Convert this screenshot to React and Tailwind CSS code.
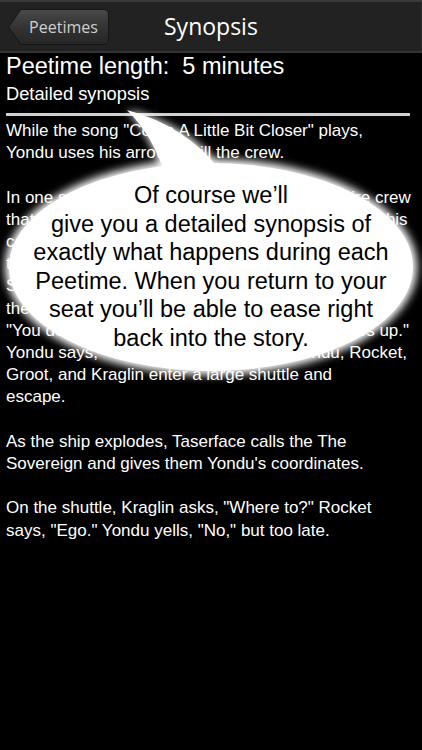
import React from 'react';

// paragraphs kept as the lines shown on the device screen
const paragraphs = [
  ['While the song "Come A Little Bit Closer" plays,', 'Yondu uses his arrow to kill the crew.'],
  [
    'In one swift sweep, Yondu\'s arrow kills the entire crew',
    'that betrayed him, and then it flies straight back to his',
    'command ship. Taserface, badly wounded, crawls',
    'to the console and sends a message to the ship.',
    'Sovereign fleet. Kraglin leads the others through',
    'the burning halls. Taserface warns them,',
    '"You don\'t have much time before this ship blows up."',
    'Yondu says, "Then we\'d better hurry." Yondu, Rocket,',
    'Groot, and Kraglin enter a large shuttle and',
    'escape.',
  ],
  ['As the ship explodes, Taserface calls the The', 'Sovereign and gives them Yondu\'s coordinates.'],
  ['On the shuttle, Kraglin asks, "Where to?" Rocket', 'says, "Ego." Yondu yells, "No," but too late.'],
];

const BackButton = () => (
  <div className="relative h-[36px] w-[101px]">
    <svg className="absolute inset-0" width="101" height="36" viewBox="0 0 101 36">
      <defs>
        <linearGradient id="btn" x1="0" y1="0" x2="0" y2="1">
          <stop offset="0" stopColor="#4a4a4a" />
          <stop offset="0.5" stopColor="#333333" />
          <stop offset="1" stopColor="#262626" />
        </linearGradient>
      </defs>
      <path d="M0.5 18 L13 0.5 H95 Q100.5 0.5 100.5 6 V30 Q100.5 35.5 95 35.5 H13 Z" fill="url(#btn)" stroke="#151515" />
    </svg>
    <span className="absolute inset-0 flex items-center justify-center pl-[10px] text-[16px] text-[#cfcfcf] [font-family:'Open_Sans',sans-serif]">
      Peetimes
    </span>
  </div>
);

const Bubble = () => (
  <div className="absolute left-0 top-0 h-[400px] w-[422px] pointer-events-none">
    <svg className="absolute inset-0" width="422" height="400" viewBox="0 0 422 400">
      <defs>
        <filter id="glow" x="-10%" y="-10%" width="120%" height="120%">
          <feGaussianBlur stdDeviation="4.5" />
        </filter>
      </defs>
      <g fill="#ffffff" filter="url(#glow)">
        <ellipse cx="211" cy="267" rx="206" ry="108" />
        <path d="M163 175 Q152 136 127 110 Q186 124 222 168 Z" />
      </g>
      <g fill="#ffffff">
        <ellipse cx="211" cy="267" rx="202" ry="104" />
        <path d="M165 175 Q154 137 127 110 Q186 126 220 170 Z" />
      </g>
    </svg>
    <div className="absolute left-0 right-0 top-[181px] text-center text-[23.5px] leading-[28.5px] text-black [font-family:'Liberation_Sans',Arial,sans-serif]">
      Of course we’ll<br />
      give you a detailed synopsis of<br />
      exactly what happens during each<br />
      Peetime. When you return to your<br />
      seat you’ll be able to ease right<br />
      back into the story.
    </div>
  </div>
);

export default function App() {
  return (
    <div className="relative h-[750px] w-[422px] overflow-hidden bg-black [font-family:'Liberation_Sans',Arial,sans-serif]">
      <div className="flex h-[53px] items-center border-t-2 border-b-2 border-r border-t-[#3a3a3a] border-b-[#333333] border-r-[#2e2e2e] bg-[#222222] px-[8px]">
        <BackButton />
        <h1 className="ml-[55px] text-[23px] text-white [font-family:'Open_Sans',sans-serif]">Synopsis</h1>
      </div>

      <div className="px-[6px]">
        <div className="text-[23.5px] leading-[27px] text-white">Peetime length:&nbsp; 5 minutes</div>
        <div className="mt-[3px] text-[18.3px] leading-[22px] text-white">Detailed synopsis</div>
        <div className="mt-[8px] h-[3px] w-[404px] bg-[#d0d0d0]" />
        <div className="mt-[4px] whitespace-nowrap text-[17px] leading-[22.2px] text-white">
          {paragraphs.map((lines, i) => (
            <p key={i} className="mb-[22.2px]">
              {lines.map((l, j) => (
                <React.Fragment key={j}>
                  {l}
                  {j < lines.length - 1 && <br />}
                </React.Fragment>
              ))}
            </p>
          ))}
        </div>
      </div>

      <Bubble />
    </div>
  );
}
